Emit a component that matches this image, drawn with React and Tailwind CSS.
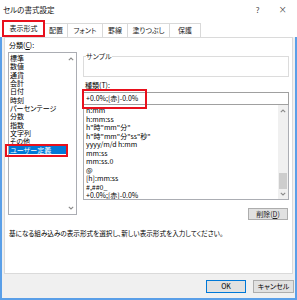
import React from "react";

function Chevron({ up }) {
  return (
    <svg width="6" height="4" viewBox="0 0 6 4" className="block">
      <polyline
        points={up ? "0.8,3.2 3,1 5.2,3.2" : "0.8,0.8 3,3 5.2,0.8"}
        fill="none"
        stroke="#8a8a8a"
        strokeWidth="1.1"
      />
    </svg>
  );
}

const leftItems = [
  "標準",
  "数値",
  "通貨",
  "会計",
  "日付",
  "時刻",
  "パーセンテージ",
  "分数",
  "指数",
  "文字列",
  "その他",
];

const rightItems = [
  "h:mm",
  "h:mm:ss",
  'h"時"mm"分"',
  'h"時"mm"分"ss"秒"',
  "yyyy/m/d h:mm",
  "mm:ss",
  "mm:ss.0",
  "@",
  "[h]:mm:ss",
  "#,##0_",
  "+0.0%;[赤]-0.0%",
];

function Tab({ children, w }) {
  return (
    <div
      className={`${w} h-[14px] flex items-center justify-center border-t border-r border-[#d9d9d9] bg-white text-[#222]`}
    >
      {children}
    </div>
  );
}

export default function App() {
  return (
    <div className="w-[297px] h-[300px] bg-white flex flex-col text-[7px] text-black font-['Noto_Sans_CJK_JP','Noto_Sans',sans-serif] [font-feature-settings:'palt'] leading-none overflow-hidden">
      {/* title bar */}
      <div className="h-[20px] shrink-0 flex items-center pl-[3px] pr-[10px]">
        <span className="text-[7.5px] text-[#111]">セルの書式設定</span>
        <span className="ml-auto text-[8px] text-[#444]">?</span>
        <span className="ml-[19px] text-[10px] text-[#333] font-['DejaVu_Sans',sans-serif] font-light">
          ×
        </span>
      </div>

      {/* tabs */}
      <div className="h-[17px] shrink-0 flex items-end pl-[2px]">
        <div className="w-[43px] h-[17px] border-2 border-[#e8101c] bg-white flex items-center justify-center text-[#111]">
          表示形式
        </div>
        <Tab w="w-[23px]">配置</Tab>
        <Tab w="w-[35px]">フォント</Tab>
        <Tab w="w-[25px]">罫線</Tab>
        <Tab w="w-[42px]">塗りつぶし</Tab>
        <Tab w="w-[31px]">保護</Tab>
      </div>

      {/* body */}
      <div className="flex-1 flex flex-col border-x-2 border-b-2 border-[#5a9fe8] bg-[#f0f0f0]">
        {/* panel */}
        <div className="h-[237px] mx-[2px] bg-white border border-[#dadada] flex flex-col pt-[3px] pl-[3px] pr-[3px]">
          <div className="flex gap-[6px]">
            {/* left column */}
            <div className="w-[69px] flex flex-col">
              <div className="h-[8px] leading-[8px] mb-[3px] pl-[1px]">
                分類(<span className="underline">C</span>):
              </div>
              <div className="h-[163px] border border-[#abadb3] bg-white flex">
                <div className="flex-1 flex flex-col pt-[1px]">
                  {leftItems.map((t) => (
                    <div key={t} className="h-[8.35px] leading-[8.35px] pl-[1px] whitespace-nowrap">
                      {t}
                    </div>
                  ))}
                  <div className="relative h-[8.35px] leading-[8.35px] pl-[1px] bg-[#0078d7] text-white whitespace-nowrap">
                    ユーザー定義
                    <div className="absolute -left-[4px] -right-[2px] -top-[2px] -bottom-[3px] border-2 border-[#e8101c]" />
                  </div>
                </div>
                <div className="w-[10px] flex flex-col items-center justify-between py-[4px]">
                  <Chevron up />
                  <Chevron />
                </div>
              </div>
            </div>

            {/* right column */}
            <div className="flex-1 flex flex-col">
              <fieldset className="mt-[11px] h-[25px] border border-[#dcdcdc] px-[1px]">
                <legend className="px-0 ml-[1px] leading-[8px] text-[#222]">サンプル</legend>
              </fieldset>
              <div className="mt-[4px] h-[8px] leading-[8px] pl-[2px]">
                種類(<span className="underline">T</span>):
              </div>
              <div className="relative mt-[3px] h-[13px] border border-[#a0a0a0] flex items-center pl-[2px]">
                +0.0%;[赤]-0.0%
                <div className="absolute -left-[2px] -top-[4px] w-[65px] h-[20px] border-2 border-[#e8101c]" />
              </div>
              <div className="h-[95px] border border-t-0 border-[#abadb3] flex bg-white">
                <div className="flex-1 flex flex-col pt-[1px] overflow-hidden">
                  {rightItems.map((t) => (
                    <div key={t} className="h-[8.5px] leading-[8.5px] pl-[2px] whitespace-nowrap shrink-0">
                      {t}
                    </div>
                  ))}
                </div>
                <div className="w-[10px] bg-[#f0f0f0] flex flex-col items-center pt-[4px] pb-[3px]">
                  <Chevron up />
                  <div className="flex-1" />
                  <div className="w-[8px] h-[16px] bg-[#cdcdcd] mb-[3px]" />
                  <Chevron />
                </div>
              </div>
              <div className="flex justify-end mt-[8px] pr-[1px]">
                <div className="w-[40px] h-[12px] bg-[#e1e1e1] border border-[#adadad] flex items-center justify-center text-[#222]">
                  削除(<span className="underline">D</span>)
                </div>
              </div>
            </div>
          </div>
          <div className="mt-[10px] pl-[1px] text-[6.6px] whitespace-nowrap">
            基になる組み込みの表示形式を選択し、新しい表示形式を入力してください。
          </div>
        </div>

        {/* footer */}
        <div className="flex-1 flex items-center justify-end gap-[7px] pr-[1px]">
          <div className="w-[40px] h-[13px] bg-[#e1e1e1] border border-[#0078d7] flex items-center justify-center">
            OK
          </div>
          <div className="w-[41px] h-[13px] bg-[#e1e1e1] border border-[#adadad] flex items-center justify-center">
            キャンセル
          </div>
        </div>
      </div>
    </div>
  );
}
